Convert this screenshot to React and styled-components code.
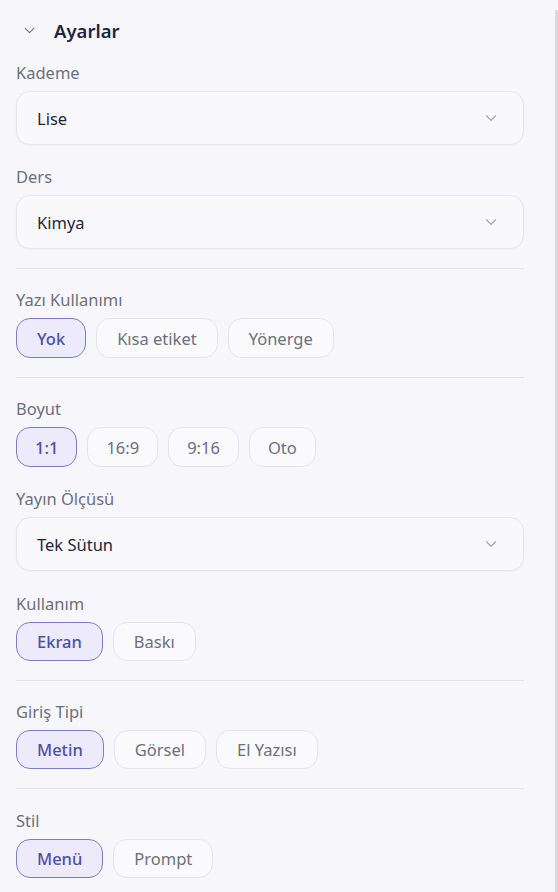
import styled, { createGlobalStyle } from "styled-components";

const GlobalStyle = createGlobalStyle`
  html, body {
    margin: 0;
    padding: 0;
    background: #f7f7fb;
    font-family: "Noto Sans", "Open Sans", sans-serif;
  }
`

const Page = styled.div`
  display: flex;
  flex-direction: row;
  width: 558px;
  height: 892px;
  overflow: hidden;
  background: #f7f7fb;
`
const Panel = styled.div`
  flex: 1;
  display: flex;
  flex-direction: column;
  padding: 0 31px 0 16px;
`
const ScrollEdge = styled.div`
  width: 3px;
  margin-top: 10px;
  background: #d9d9de;
`
const Header = styled.div`
  display: flex;
  align-items: center;
  gap: 16px;
  height: 24px;
  margin-top: 18px;
  padding-left: 5px;
  font-size: 18.5px;
  font-weight: 600;
  color: #1d2540;
`
const Label = styled.div`
  font-size: 16.5px;
  color: #6c6f7d;
  line-height: 20px;
  margin-top: ${p => p.$top || 18}px;
  margin-bottom: 8px;
`
const Select = styled.div`
  display: flex;
  align-items: center;
  justify-content: space-between;
  height: 54px;
  box-sizing: border-box;
  padding: 0 23px 0 20px;
  border: 1px solid #e5e5ec;
  border-radius: 14px;
  background: #f9f9fc;
  font-size: 16.5px;
  color: #23263a;
  box-shadow: 0 1px 2px rgba(30, 30, 60, 0.04);
`
const Divider = styled.div`
  height: 1px;
  background: #e3e3ea;
  margin-top: ${p => p.$top || 18}px;
`
const ChipRow = styled.div`
  display: flex;
  gap: 10px;
`
const Chip = styled.div`
  display: flex;
  align-items: center;
  justify-content: center;
  height: ${p => p.$h || 40}px;
  padding: 0 ${p => p.$pad || 20}px;
  border-radius: 14px;
  font-size: 16.5px;
  border: ${p => (p.$on ? "1.5px solid #7b7fbf" : "1px solid #e4e4eb")};
  background: ${p => (p.$on ? "#eceafb" : "#fafafd")};
  color: ${p => (p.$on ? "#4c50a6" : "#6c6f7d")};
  font-weight: ${p => (p.$on ? 500 : 400)};
  box-sizing: border-box;
`

const Chevron = ({ color = "#a5a7b3", size = 18 }) => (
  <svg width={size} height={size} viewBox="0 0 24 24" fill="none" stroke={color} strokeWidth="1.6" strokeLinecap="round" strokeLinejoin="round">
    <path d="M6 9l6 6 6-6" />
  </svg>
)

const Dropdown = ({ value }) => (
  <Select>
    <span>{value}</span>
    <Chevron />
  </Select>
)

const Chips = ({ items, active, pad, h }) => (
  <ChipRow>
    {items.map(it => (
      <Chip key={it} $on={it === active} $pad={pad} $h={h}>{it}</Chip>
    ))}
  </ChipRow>
)

const App = () => {
  return (
    <Page>
      <GlobalStyle />
      <Panel>
        <Header>
          <Chevron color="#6c6f7d" size={17} />
          <span>Ayarlar</span>
        </Header>
        <Label $top={21}>Kademe</Label>
        <Dropdown value="Lise" />
        <Label $top={22}>Ders</Label>
        <Dropdown value="Kimya" />
        <Divider $top={19} />
        <Label $top={21}>Yazı Kullanımı</Label>
        <Chips items={["Yok", "Kısa etiket", "Yönerge"]} active="Yok" />
        <Divider $top={19} />
        <Label $top={21}>Boyut</Label>
        <Chips items={["1:1", "16:9", "9:16", "Oto"]} active="1:1" pad={18} />
        <Label $top={22}>Yayın Ölçüsü</Label>
        <Dropdown value="Tek Sütun" />
        <Label $top={23}>Kullanım</Label>
        <Chips items={["Ekran", "Baskı"]} active="Ekran" h={39} />
        <Divider $top={19} />
        <Label $top={21}>Giriş Tipi</Label>
        <Chips items={["Metin", "Görsel", "El Yazısı"]} active="Metin" h={39} />
        <Divider $top={19} />
        <Label $top={22}>Stil</Label>
        <Chips items={["Menü", "Prompt"]} active="Menü" h={39} />
      </Panel>
      <ScrollEdge />
    </Page>
  )
};
export default App;
